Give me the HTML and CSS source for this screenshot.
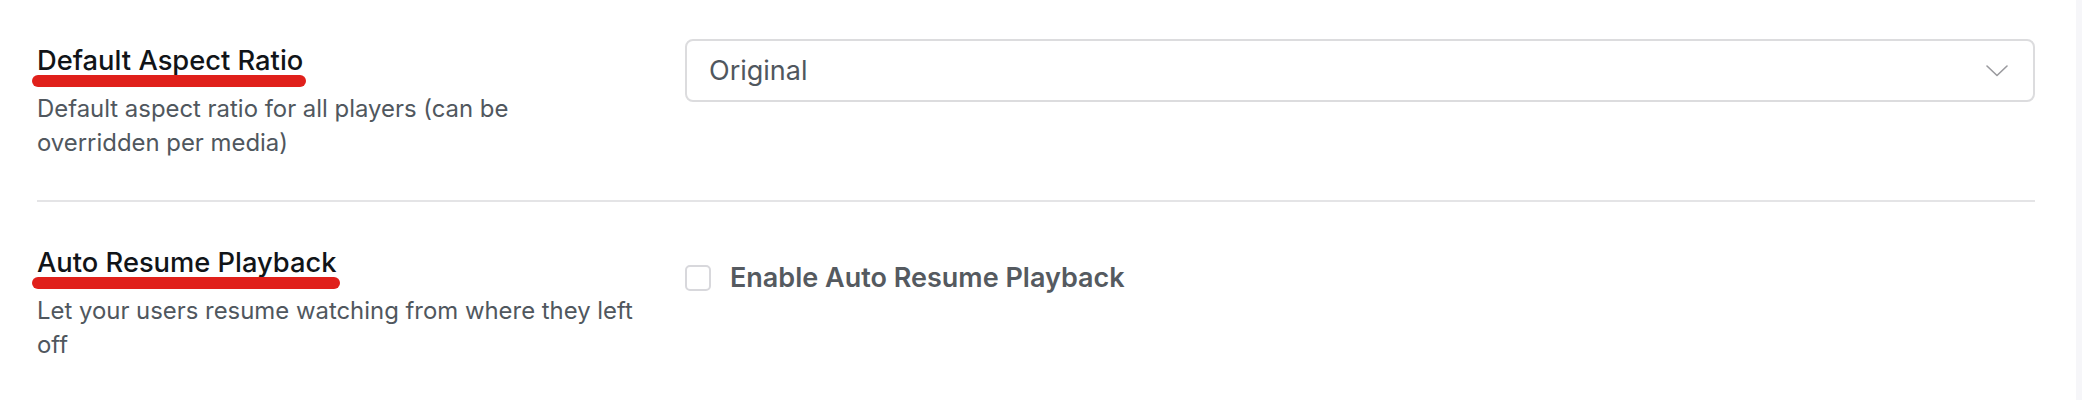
FILE: index.html
```html
<!DOCTYPE html>
<html lang="en">
<head>
    <meta charset="UTF-8">
    <meta name="viewport" content="width=device-width, initial-scale=1.0">
    <title>Player Settings</title>
    <link rel="stylesheet" href="styles.css">
</head>
<body>
    <div class="settings-card">
        <div class="setting-row">
            <div class="setting-label">
                <h2 class="setting-title marked">Default Aspect Ratio</h2>
                <p class="setting-desc">Default aspect ratio for all players (can be overridden per media)</p>
            </div>
            <div class="setting-field">
                <div class="select-box">
                    <span class="select-value">Original</span>
                    <svg class="select-chevron" width="22" height="12" viewBox="0 0 22 12" fill="none" stroke="currentColor" stroke-width="1.6" stroke-linecap="round" stroke-linejoin="round">
                        <polyline points="1,1 11,10.5 21,1"></polyline>
                    </svg>
                </div>
            </div>
        </div>

        <div class="setting-row">
            <div class="setting-label">
                <h2 class="setting-title marked">Auto Resume Playback</h2>
                <p class="setting-desc">Let your users resume watching from where they left off</p>
            </div>
            <div class="setting-field">
                <label class="check-option">
                    <input type="checkbox" class="check-input">
                    <span>Enable Auto Resume Playback</span>
                </label>
            </div>
        </div>
    </div>
</body>
</html>
```

FILE: styles.css
```css
* {
    margin: 0;
    padding: 0;
    box-sizing: border-box;
    font-family: Inter, 'Noto Sans', 'Liberation Sans', sans-serif;
}

body {
    background-color: #f6f6f9;
    min-height: 100vh;
}

.settings-card {
    width: 2076px;
    min-height: 400px;
    background-color: #fff;
    padding: 0 41px 0 37px;
}

.setting-row {
    display: flex;
    align-items: flex-start;
    gap: 48px;
    padding: 39px 0 40px;
}

.setting-row + .setting-row {
    border-top: 2px solid #e4e4e6;
}

.setting-label {
    width: 600px;
    flex-shrink: 0;
}

.setting-title {
    display: inline-block;
    position: relative;
    font-size: 27.3px;
    font-weight: 500;
    line-height: 44px;
    color: #111418;
}

/* red marker stroke under the title */
.marked::after {
    content: '';
    position: absolute;
    left: -5px;
    right: -3px;
    top: 36px;
    height: 12px;
    border-radius: 6px;
    background-color: #e0201b;
}

.setting-desc {
    margin-top: 9px;
    max-width: 597px;
    font-size: 23.9px;
    line-height: 34px;
    color: #50575e;
}

.setting-field {
    flex: 1;
}

.select-box {
    height: 63px;
    border: 2px solid #dcdcde;
    border-radius: 8px;
    display: flex;
    align-items: center;
    justify-content: space-between;
    padding: 0 25px 0 22px;
    background-color: #fff;
}

.select-value {
    font-size: 27px;
    color: #50575e;
}

.select-chevron {
    color: #9a9a9e;
}

.check-option {
    display: flex;
    align-items: center;
    gap: 19px;
    margin-top: 20px;
    font-size: 27px;
    font-weight: 600;
    color: #555a60;
}

.check-input {
    appearance: none;
    -webkit-appearance: none;
    width: 26px;
    height: 26px;
    border: 2px solid #d8d8dc;
    border-radius: 5px;
    background-color: #fff;
}
```
